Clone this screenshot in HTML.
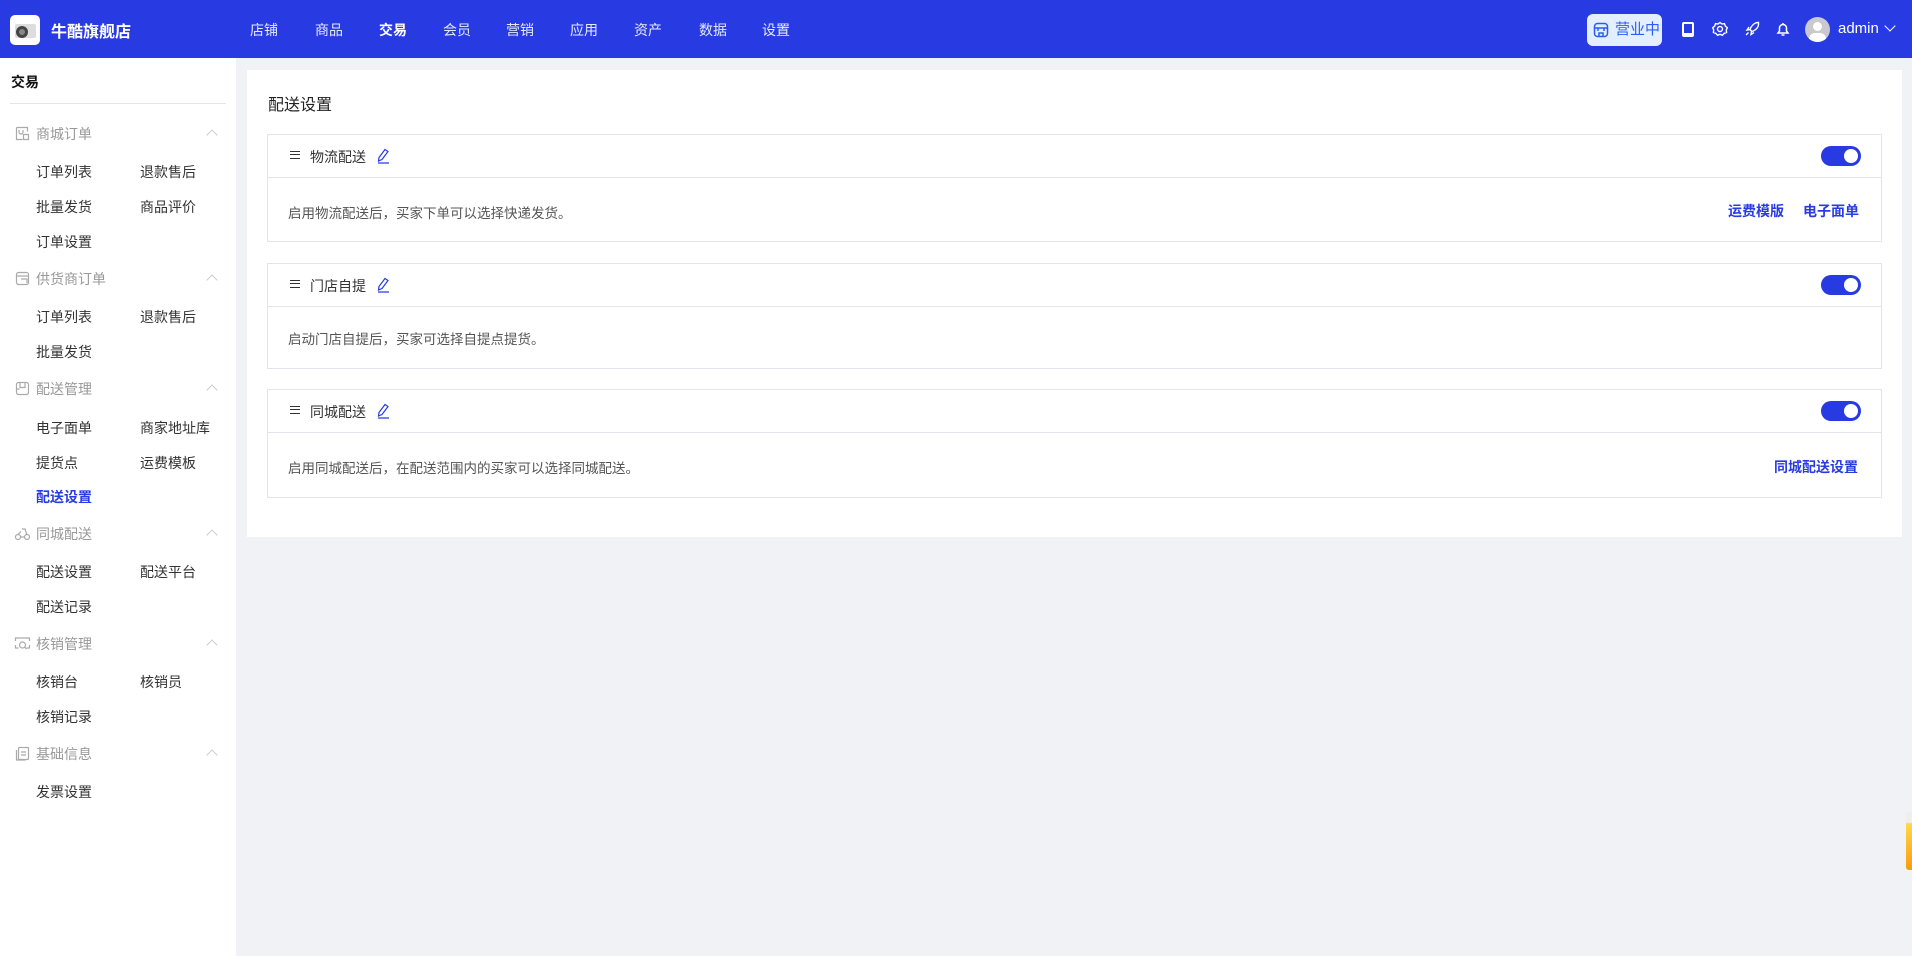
<!DOCTYPE html>
<html><head><meta charset="utf-8"><style>
*{margin:0;padding:0;box-sizing:border-box}
body{width:1912px;height:956px;background:#f0f2f5;font-family:"Liberation Sans","Noto Sans CJK SC",sans-serif;font-size:14px;color:#333;position:relative;overflow:hidden}
.hd{position:absolute;left:0;top:0;width:1912px;height:58px;background:#283be3;color:#fff}
.logo{position:absolute;left:10px;top:15px;width:30px;height:30px;background:#fff;border-radius:5px;overflow:hidden}
.shop{position:absolute;left:51px;top:18px;font-size:16px;font-weight:bold}
.nav span{position:absolute;top:20px;font-size:14px;color:#e6e9ff;white-space:nowrap}
.nav b{position:absolute;top:20px;font-size:14px;white-space:nowrap}
.biz{position:absolute;left:1587px;top:14px;width:75px;height:32px;background:#e3efff;border-radius:6px;color:#2b5cf5;font-size:15px;line-height:32px;padding-left:28px;white-space:nowrap}
.sb{position:absolute;left:0;top:58px;width:236px;height:898px;background:#fff}
.t{position:absolute;font-size:14px;white-space:nowrap}
.g{color:#999}
.chev{position:absolute;left:208px;width:8px;height:8px;border-left:1px solid #ccc;border-top:1px solid #ccc;transform:rotate(45deg)}
.card{position:absolute;left:247px;top:70px;width:1655px;height:467px;background:#fff}
.p{position:absolute;left:267px;width:1615px;border:1px solid #e3e4ea;background:#fff}
.ph{height:43px;border-bottom:1px solid #e3e4ea;position:relative}
.ph .m{position:absolute;left:22px;top:16px;width:10px;height:8px;border-top:1.3px solid #333;border-bottom:1.3px solid #333}
.ph .m:after{content:"";position:absolute;left:0;top:2.2px;width:10px;height:1.3px;background:#333}
.ph .n{position:absolute;left:42px;top:12px;font-size:14px;white-space:nowrap}
.tg{position:absolute;right:20px;top:11px;width:40px;height:20px;border-radius:10px;background:#283be3}
.tg:after{content:"";position:absolute;right:3px;top:3px;width:14px;height:14px;border-radius:50%;background:#fff}
.pd{position:absolute;left:20px;font-size:13.5px;color:#555;white-space:nowrap}
.lk{position:absolute;color:#283be3;font-size:14px;font-weight:bold;white-space:nowrap}
</style></head><body>
<div class="hd">
<div class="logo"><svg width="30" height="30"><rect x="5" y="9" width="21" height="14" rx="2" fill="#ddd"/><circle cx="12" cy="17" r="6" fill="#444"/><circle cx="12" cy="17" r="3" fill="#888"/></svg></div>
<div class="shop">牛酷旗舰店</div>
<div class="nav"><span style="left:250px">店铺</span><span style="left:315px">商品</span><b style="left:379px">交易</b><span style="left:443px">会员</span><span style="left:506px">营销</span><span style="left:570px">应用</span><span style="left:634px">资产</span><span style="left:699px">数据</span><span style="left:762px">设置</span></div>
<div class="biz"><svg style="position:absolute;left:6px;top:8px" width="16" height="16" fill="none" stroke="#2b5cf5" stroke-width="1.5"><rect x="1.5" y="1.5" width="13" height="13" rx="3"/><path d="M1.5 6h13M5 6v3M11 6v3M6 14v-3h4v3"/></svg>营业中</div>
<svg style="position:absolute;left:1681px;top:21px" width="14" height="17"><rect x="1" y="1" width="12" height="15" rx="2" fill="#fff"/><rect x="3" y="3" width="8" height="9" fill="#283be3"/></svg>
<svg style="position:absolute;left:1712px;top:21px" width="16" height="16" fill="none" stroke="#fff" stroke-width="1.4"><circle cx="8" cy="8" r="2.5"/><path d="M8 1.5l2 1.5 2.5-.3.8 2.4 2 1.6-1 2.3.3 2.5-2.5.8-1.6 2-2.5-1-2.5 1-1.6-2-2.5-.8.3-2.5-1-2.3 2-1.6.8-2.4L6 3z"/></svg>
<svg style="position:absolute;left:1744px;top:21px" width="16" height="16" fill="none" stroke="#fff" stroke-width="1.4"><path d="M14.5 1.5c-4 0-7 3-8.5 7l2 2c4-1.5 7-4.5 6.5-9zM6 8.5l-3 .5 2-3M7.5 10.5l-.5 3 3-2M2 14l2.5-2.5"/></svg>
<svg style="position:absolute;left:1775px;top:21px" width="16" height="16" fill="none" stroke="#fff" stroke-width="1.5"><path d="M3 12h10l-1.5-2V7a3.5 3.5 0 0 0-7 0v3zM6.5 14h3M8 2v1.5"/></svg>
<div style="position:absolute;left:1805px;top:17px;width:25px;height:25px;border-radius:50%;background:#c9c9cf;overflow:hidden"><div style="position:absolute;left:8px;top:5px;width:9px;height:9px;border-radius:50%;background:#fff"></div><div style="position:absolute;left:4px;top:16px;width:17px;height:10px;border-radius:6px 6px 0 0;background:#fff"></div></div>
<span style="position:absolute;left:1838px;top:20px;font-size:15px">admin</span>
<div style="position:absolute;left:1886px;top:22px;width:8px;height:8px;border-right:1.3px solid #fff;border-bottom:1.3px solid #fff;transform:rotate(45deg)"></div>
</div>
<div class="sb">
<div class="t" style="left:11px;top:14px;font-weight:bold;color:#111">交易</div>
<div style="position:absolute;left:10px;top:45px;width:216px;height:1px;background:#e5e6eb"></div>
<svg style="position:absolute;left:15px;top:68px" width="15" height="15" fill="none" stroke="#aaa" stroke-width="1.2"><path d="M1.5 1.5h11v4M1.5 1.5v12h6M8.5 8.5h5v5h-5zM4 4v2a2 2 0 0 0 4 0V4"/></svg>
<span class="t g" style="left:36px;top:66px">商城订单</span><i class="chev" style="top:73px"></i>
<span class="t" style="left:36px;top:104px">订单列表</span><span class="t" style="left:140px;top:104px">退款售后</span>
<span class="t" style="left:36px;top:139px">批量发货</span><span class="t" style="left:140px;top:139px">商品评价</span>
<span class="t" style="left:36px;top:174px">订单设置</span>
<svg style="position:absolute;left:15px;top:213px" width="15" height="15" fill="none" stroke="#aaa" stroke-width="1.2"><rect x="1.5" y="1.5" width="12" height="12" rx="2"/><path d="M1.5 5h12M6 8h6v4"/></svg>
<span class="t g" style="left:36px;top:211px">供货商订单</span><i class="chev" style="top:218px"></i>
<span class="t" style="left:36px;top:249px">订单列表</span><span class="t" style="left:140px;top:249px">退款售后</span>
<span class="t" style="left:36px;top:284px">批量发货</span>
<svg style="position:absolute;left:15px;top:323px" width="15" height="15" fill="none" stroke="#aaa" stroke-width="1.2"><rect x="1.5" y="1.5" width="12" height="12" rx="2"/><path d="M5 1.5v5h5v-5M1.5 8h3"/></svg>
<span class="t g" style="left:36px;top:321px">配送管理</span><i class="chev" style="top:328px"></i>
<span class="t" style="left:36px;top:360px">电子面单</span><span class="t" style="left:140px;top:360px">商家地址库</span>
<span class="t" style="left:36px;top:395px">提货点</span><span class="t" style="left:140px;top:395px">运费模板</span>
<span class="t" style="left:36px;top:429px;color:#283be3;font-weight:bold">配送设置</span>
<svg style="position:absolute;left:14px;top:468px" width="17" height="15" fill="none" stroke="#aaa" stroke-width="1.2"><circle cx="4" cy="11" r="2.5"/><circle cx="13" cy="11" r="2.5"/><path d="M6.5 11h4M8 3h3l2 6M4 8.5l3-3"/></svg>
<span class="t g" style="left:36px;top:466px">同城配送</span><i class="chev" style="top:473px"></i>
<span class="t" style="left:36px;top:504px">配送设置</span><span class="t" style="left:140px;top:504px">配送平台</span>
<span class="t" style="left:36px;top:539px">配送记录</span>
<svg style="position:absolute;left:14px;top:578px" width="17" height="15" fill="none" stroke="#aaa" stroke-width="1.2"><path d="M1.5 5V2h14v3M1.5 9v3h3M15.5 9v3h-3"/><circle cx="8.5" cy="9" r="3"/><path d="M10.5 11l2 2"/></svg>
<span class="t g" style="left:36px;top:576px">核销管理</span><i class="chev" style="top:583px"></i>
<span class="t" style="left:36px;top:614px">核销台</span><span class="t" style="left:140px;top:614px">核销员</span>
<span class="t" style="left:36px;top:649px">核销记录</span>
<svg style="position:absolute;left:15px;top:688px" width="15" height="15" fill="none" stroke="#aaa" stroke-width="1.2"><rect x="3.5" y="1.5" width="10" height="12" rx="1"/><path d="M1.5 4v10h9M6 6h5M6 9h5"/></svg>
<span class="t g" style="left:36px;top:686px">基础信息</span><i class="chev" style="top:693px"></i>
<span class="t" style="left:36px;top:724px">发票设置</span>
</div>
<div class="card"><div style="position:absolute;left:21px;top:21px;font-size:16px;color:#222">配送设置</div></div>

<div class="p" style="top:134px;height:108px">
<div class="ph"><span class="m"></span><span class="n">物流配送</span>
<svg style="position:absolute;left:108px;top:13px" width="14" height="16" fill="none" stroke="#283be3" stroke-width="1.2"><path d="M9 1.5l3 2-6 8-3.5 1.5.5-3.5zM2 15h11"/></svg><div class="tg"></div></div>
<span class="pd" style="top:67px">启用物流配送后，买家下单可以选择快递发货。</span>
<span class="lk" style="left:1460px;top:66px">运费模版</span><span class="lk" style="left:1535px;top:66px">电子面单</span>
</div>
<div class="p" style="top:263px;height:106px">
<div class="ph"><span class="m"></span><span class="n">门店自提</span>
<svg style="position:absolute;left:108px;top:13px" width="14" height="16" fill="none" stroke="#283be3" stroke-width="1.2"><path d="M9 1.5l3 2-6 8-3.5 1.5.5-3.5zM2 15h11"/></svg><div class="tg"></div></div>
<span class="pd" style="top:64px">启动门店自提后，买家可选择自提点提货。</span>
</div>
<div class="p" style="top:389px;height:109px">
<div class="ph"><span class="m"></span><span class="n">同城配送</span>
<svg style="position:absolute;left:108px;top:13px" width="14" height="16" fill="none" stroke="#283be3" stroke-width="1.2"><path d="M9 1.5l3 2-6 8-3.5 1.5.5-3.5zM2 15h11"/></svg><div class="tg"></div></div>
<span class="pd" style="top:67px">启用同城配送后，在配送范围内的买家可以选择同城配送。</span>
<span class="lk" style="left:1506px;top:67px">同城配送设置</span>
</div>
<div style="position:absolute;left:1906px;top:812px;width:6px;height:58px;border-radius:3px 0 0 3px;background:linear-gradient(#eee 0,#eee 18%,#ffd84a 20%,#ff9a0a 100%)"></div>
</body></html>
